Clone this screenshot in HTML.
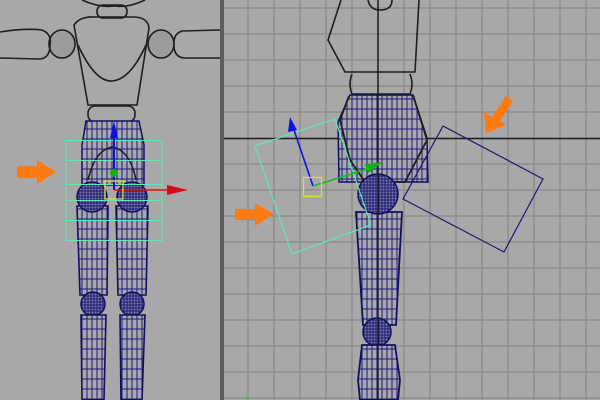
<!DOCTYPE html>
<html><head><meta charset="utf-8"><style>
html,body{margin:0;padding:0;width:600px;height:400px;overflow:hidden;background:#a8a8a8}
svg{display:block}
</style></head><body>
<svg width="600" height="400" viewBox="0 0 600 400" xmlns="http://www.w3.org/2000/svg">
<defs>
<pattern id="wf" width="5" height="10" patternUnits="userSpaceOnUse">
<rect width="5" height="10" fill="#a8a8a8"/>
<line x1="2" y1="0" x2="2" y2="10" stroke="#1a1a80" stroke-width="1"/>
<line x1="0" y1="9" x2="5" y2="9" stroke="#1a1a80" stroke-width="1"/>
</pattern>
<pattern id="wfb" width="3" height="3" patternUnits="userSpaceOnUse">
<rect width="3" height="3" fill="#7c7ca8"/>
<line x1="1" y1="0" x2="1" y2="3" stroke="#1a1a70" stroke-width="1"/>
<line x1="0" y1="2" x2="3" y2="2" stroke="#1a1a70" stroke-width="1"/>
</pattern>
</defs>
<rect width="600" height="400" fill="#a8a8a8"/>
<!-- right panel grid -->
<path stroke="#8e8e8e" stroke-width="1.5" fill="none" d="
M248 0V400M274 0V400M300 0V400M326 0V400M352 0V400M404 0V400M430 0V400M456 0V400M482 0V400M508 0V400M534 0V400M560 0V400M586 0V400
M224 8H600M224 34H600M224 60H600M224 86H600M224 112H600M224 164H600M224 190H600M224 216H600M224 242H600M224 268H600M224 294H600M224 320H600M224 346H600M224 372H600M224 398H600"/>
<line x1="224" y1="138.5" x2="600" y2="138.5" stroke="#1a1a1a" stroke-width="1.5"/>
<line x1="378" y1="0" x2="378" y2="400" stroke="#1a1a1a" stroke-width="1.5"/>
<!-- divider -->
<rect x="220" y="0" width="4" height="400" fill="#5c5c5c"/>

<!-- LEFT PANEL figure sketch -->
<g fill="none" stroke="#1e1e1e" stroke-width="1.6">
<path d="M82 0 Q100 8 114 6 Q128 8 145 0"/>
<rect x="97" y="5" width="30" height="13" rx="6"/>
<path d="M74 25 Q80 16 95 17 L135 17 Q148 18 149 28 L137 105 L88 105 Z"/>
<path d="M78 45 Q95 82 112 81 Q130 80 146 45"/>
<ellipse cx="62" cy="44" rx="13" ry="14" fill="#9c9c9c"/>
<ellipse cx="161" cy="44" rx="13" ry="14" fill="#9c9c9c"/>
<path d="M0 32 Q25 28 42 30 Q52 34 50 45 Q50 58 40 59 L0 58"/>
<path d="M220 30 L182 31 Q173 34 174 45 Q174 57 184 58 L220 58"/>
<rect x="88" y="106" width="47" height="16" rx="7"/>
</g>
<!-- pelvis wireframe left -->
<path d="M86 121 L139 121 L144 145 L144 185 L82 185 L82 145 Z" fill="url(#wf)" stroke="#101060" stroke-width="1.5"/>
<path d="M88 180 Q95 150 112 147 Q130 150 136 180" fill="none" stroke="#1e1e1e" stroke-width="1.5"/>
<!-- thighs -->
<path d="M77 206 L108 206 L107 295 L80 295 Z" fill="url(#wf)" stroke="#101060" stroke-width="1.6"/>
<path d="M116 206 L148 206 L146 295 L118 295 Z" fill="url(#wf)" stroke="#101060" stroke-width="1.6"/>
<!-- hip balls -->
<circle cx="92" cy="197" r="15" fill="url(#wfb)" stroke="#101060" stroke-width="1.5"/>
<circle cx="132" cy="197" r="15" fill="url(#wfb)" stroke="#101060" stroke-width="1.5"/>
<!-- knees -->
<ellipse cx="93" cy="304" rx="12" ry="12" fill="url(#wfb)" stroke="#101060" stroke-width="1.5"/>
<ellipse cx="132" cy="304" rx="12" ry="12" fill="url(#wfb)" stroke="#101060" stroke-width="1.5"/>
<!-- shins -->
<path d="M81 315 L106 315 L104 400 L82 400 Z" fill="url(#wf)" stroke="#101060" stroke-width="1.6"/>
<path d="M120 315 L145 315 L142 400 L121 400 Z" fill="url(#wf)" stroke="#101060" stroke-width="1.6"/>
<!-- green box -->
<g stroke="#5fe8b0" stroke-width="1" fill="none">
<rect x="66" y="140.5" width="96" height="100"/>
<line x1="66" y1="160.5" x2="162" y2="160.5"/>
<line x1="66" y1="184.5" x2="162" y2="184.5"/>
<line x1="66" y1="200.5" x2="162" y2="200.5"/>
<line x1="66" y1="220.5" x2="162" y2="220.5"/>
</g>
<!-- manipulator left -->
<line x1="114" y1="190" x2="114" y2="133" stroke="#1010e0" stroke-width="2"/>
<path d="M110 138 L114 121 L118 138 Z" fill="#1010e0"/>
<line x1="114" y1="190" x2="172" y2="190" stroke="#e01010" stroke-width="1.5"/>
<path d="M167 185 L188 190 L167 195 Z" fill="#d01010"/>
<circle cx="114" cy="173" r="4" fill="#10b010"/>
<rect x="105" y="181" width="18" height="18" fill="none" stroke="#e0e020" stroke-width="1.3"/>
<!-- orange arrow left -->
<path d="M17 166 L37 166 L37 160 L56 172 L37 184 L37 178 L17 178 Z" fill="#ff7a10"/>

<!-- RIGHT PANEL figure -->
<g fill="none" stroke="#1e1e1e" stroke-width="1.6">
<path d="M341 0 L328 40 L345 72 L415 72 L419 0"/>
<path d="M368 0 Q370 10 380 10 Q392 10 392 0"/>
<path d="M352 74 Q348 84 352 94 L410 94 Q414 84 410 74"/>
</g>
<path d="M350 95 L413 95 L427 138 L428 182 L339 182 L338 122 Z" fill="url(#wf)" stroke="#101060" stroke-width="1.5"/>
<path d="M349 96 L340 120 L350 160 L365 182 L405 182 L427 140 L413 95" fill="none" stroke="#1e1e1e" stroke-width="1.8"/>
<path d="M356 212 L402 212 L396 325 L363 325 Z" fill="url(#wf)" stroke="#101060" stroke-width="1.8"/>
<circle cx="378" cy="194" r="20" fill="url(#wfb)" stroke="#101060" stroke-width="1.5"/>
<circle cx="377" cy="332" r="14" fill="url(#wfb)" stroke="#101060" stroke-width="1.5"/>
<path d="M362 345 L395 345 L400 380 L398 400 L360 400 L358 380 Z" fill="url(#wf)" stroke="#101060" stroke-width="1.8"/>
<line x1="378" y1="95" x2="378" y2="400" stroke="#1a1a1a" stroke-width="1.3"/>
<!-- rotated boxes -->
<path d="M255 146 L335 119 L371 225 L292 254 Z" fill="none" stroke="#5fe8b0" stroke-width="1.2"/>
<path d="M443 126 L543 179 L504 252 L403 199 Z" fill="none" stroke="#1a1a70" stroke-width="1.2"/>
<!-- manipulator right -->
<line x1="313" y1="186" x2="293" y2="127" stroke="#1010e0" stroke-width="1.6"/>
<path d="M288 132 L290 117 L297 130 Z" fill="#1010e0"/>
<line x1="313" y1="186" x2="370" y2="168" stroke="#10c010" stroke-width="1.5"/>
<path d="M365 164 L383 162 L368 173 Z" fill="#10b010"/>
<rect x="303.5" y="177.5" width="18" height="19" fill="none" stroke="#e0e020" stroke-width="1.3"/>
<!-- orange arrows right -->
<path d="M235 209 L255 209 L255 203 L274 214 L255 226 L255 220 L235 220 Z" fill="#ff7a10"/>
<path d="M506 96 L513 101 L500 121 L506 125 L486 133 L484 112 L492 117 Z" fill="#ff7a10"/>
<text x="245" y="400" font-family="Liberation Sans, sans-serif" font-size="8" fill="#20e020">y</text>
</svg>
</body></html>
